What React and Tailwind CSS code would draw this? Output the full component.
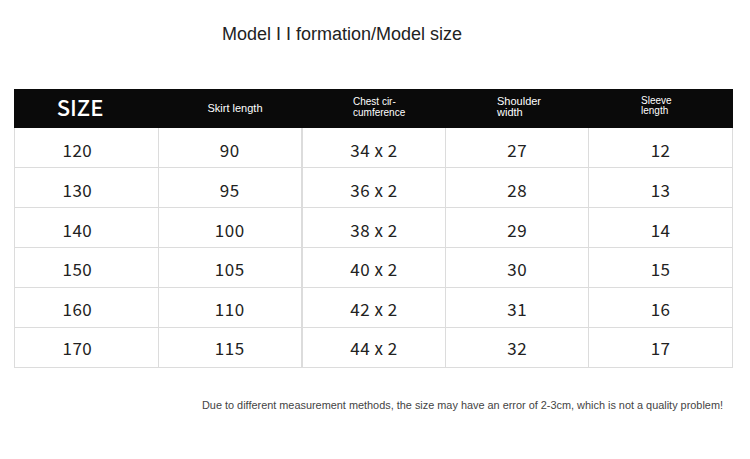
export default function App() {
  const rows = [
    ["120", "90", "34 x 2", "27", "12"],
    ["130", "95", "36 x 2", "28", "13"],
    ["140", "100", "38 x 2", "29", "14"],
    ["150", "105", "40 x 2", "30", "15"],
    ["160", "110", "42 x 2", "31", "16"],
    ["170", "115", "44 x 2", "32", "17"],
  ];
  const pads = ["pt-[5px]", "pt-[4px]", "pt-[4px]", "pt-[3px]", "pt-[2px]", "pt-[1px]"];
  const widths = ["w-[144px]", "w-[144px]", "w-[144px]", "w-[143px]", "w-[144px]"];
  return (
    <div className="w-[750px] h-[459px] bg-white relative overflow-hidden">
      <div className="h-[89px] pt-[23px] pl-[222px] text-[18px] leading-[22px] text-[#222] font-['Liberation_Sans',Arial,sans-serif]">
        Model I I formation/Model size
      </div>
      <div className="ml-[14px] w-[719px]">
        <div className="flex h-[39px] bg-[#0a0a0a] text-white font-['Liberation_Sans',Arial,sans-serif]">
          <div className="w-[144px] flex items-center justify-center pr-[12px] pb-[4px] text-[22px] font-medium font-['Noto_Sans_CJK_SC','Noto_Sans',sans-serif]">SIZE</div>
          <div className="w-[144px] flex items-center justify-center pl-[10px] text-[11px]">Skirt length</div>
          <div className="w-[144px] flex items-center pl-[51px] text-[10px] leading-[11px] pb-[4px]">Chest cir-<br />cumference</div>
          <div className="w-[143px] flex items-center pl-[51px] text-[11px] leading-[11px] pb-[3px]">Shoulder<br />width</div>
          <div className="w-[144px] flex items-center pl-[52px] text-[10px] leading-[10px] pb-[6px]">Sleeve<br />length</div>
        </div>
        <div className="border-l border-[#dcdcdc]">
          {rows.map((r, i) => (
            <div key={i} className="flex border-b border-[#dcdcdc] h-[40px]">
              {r.map((c, j) => (
                <div
                  key={j}
                  className={`${widths[j]} ${pads[i]} flex items-center justify-center text-[17px] tracking-[0.5px] text-[#222] font-['Noto_Sans_CJK_SC','Noto_Sans',sans-serif] ${j === 1 ? "border-r-2" : "border-r"} border-[#dcdcdc] ${j === 0 ? "pr-[18px]" : ""}`}
                >
                  {c}
                </div>
              ))}
            </div>
          ))}
        </div>
      </div>
      <div className="mt-[29px] pr-[27px] text-right text-[10.9px] text-[#444] font-['Liberation_Sans',Arial,sans-serif]">
        Due to different measurement methods, the size may have an error of 2-3cm, which is not a quality problem!
      </div>
    </div>
  );
}
